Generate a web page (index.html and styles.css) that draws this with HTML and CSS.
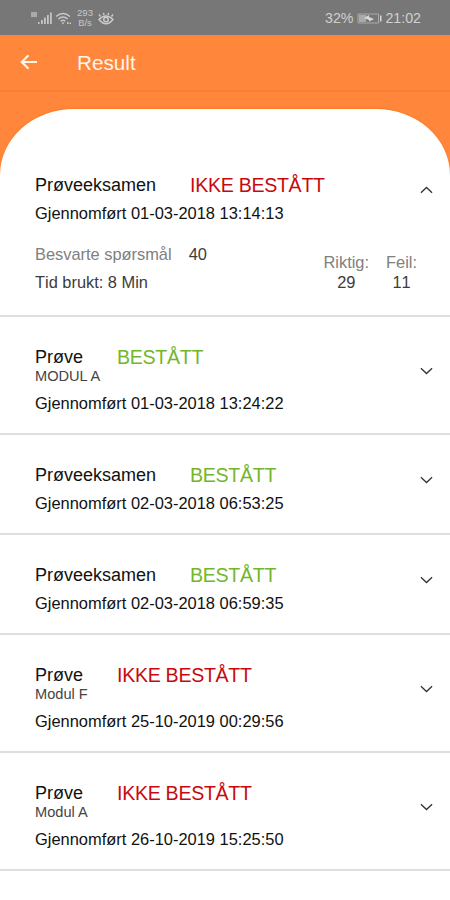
FILE: index.html
```html
<!DOCTYPE html>
<html lang="no">
<head>
<meta charset="utf-8">
<title>Result</title>
<link rel="stylesheet" href="styles.css">
</head>
<body>
<svg class="defs" width="0" height="0" aria-hidden="true">
  <symbol id="down" viewBox="0 0 14 8"><path d="M1 1l6 5.700L13 1"/></symbol>
  <symbol id="up" viewBox="0 0 14 8"><path d="M1 7l6-5.700L13 7"/></symbol>
</svg>
<div class="statusbar">
  <svg class="signal" width="23" height="14" viewBox="0 0 23 14">
    <path class="dim" d="M1 1h6v5H1z"/>
    <path d="M8 11h1.600v2H8zM11 9h1.800v4H11zM14 6.500h1.800V13H14zM17 4h1.800v9H17zM20 1.500h1.800V13H20z"/>
  </svg>
  <svg class="wifi" width="17" height="13" viewBox="0 0 17 13">
    <path d="M1 4.500q7-6 14 0M3.300 7q4.700-4 9.400 0M5.700 9.300q2.300-2 4.600 0"/>
    <path class="fill" d="M6.500 10.500h3L8 12.500zM12 10h1.500v2H12zM14.500 10.500H16v1.500h-1.500z"/>
  </svg>
  <div class="speed"><span>293</span><span>B/s</span></div>
  <svg class="eye" width="16" height="13" viewBox="0 0 16 13">
    <path d="M1 7.500q7-7 14 0-7 8.500-14 0zM2.500 4.500L1 2.500M6 3L5.500.8M10 3l.5-2.200M13.500 4.500L15 2.500"/>
    <circle cx="8" cy="7.500" r="2.300"/>
  </svg>
  <div class="right">
    <span>32%</span>
    <svg class="battery" width="25" height="11" viewBox="0 0 25 11">
      <path class="line" d="M1 1h20.500v9H1z"/>
      <path class="charge" d="M2 2h7v7H2z"/>
      <path class="bolt" d="M7 5l5-3v2l5 2-5 2.500V7z"/>
      <path class="bolt" d="M23 2.500h1.500v6H23z"/>
    </svg>
    <span class="clock">21:02</span>
  </div>
</div>
<header class="appbar">
  <svg width="18" height="16" viewBox="0 0 18 16"><path d="M17 8H2M8.500 1.300L1.800 8l6.700 6.700"/></svg>
  <h1>Result</h1>
</header>
<main class="backdrop">
  <div class="sheet">
    <section class="row first">
      <div class="head">
        <div>
          <div class="title"><h2>Prøveeksamen</h2><span class="status fail">IKKE BESTÅTT</span></div>
          <p class="date">Gjennomført 01-03-2018 13:14:13</p>
        </div>
        <svg class="chevron"><use href="#up"/></svg>
      </div>
      <div class="details">
        <div class="summary">
          <p><span class="label">Besvarte spørsmål</span><span class="answered">40</span></p>
          <p>Tid brukt: 8 Min</p>
        </div>
        <div class="score"><span class="label">Riktig:</span><span>29</span></div>
        <div class="score"><span class="label">Feil:</span><span>11</span></div>
      </div>
    </section>
    <section class="row">
      <div class="head">
        <div>
          <div class="title"><h2>Prøve</h2><span class="status pass">BESTÅTT</span></div>
          <p class="module">MODUL A</p>
          <p class="date">Gjennomført 01-03-2018 13:24:22</p>
        </div>
        <svg class="chevron"><use href="#down"/></svg>
      </div>
    </section>
    <section class="row">
      <div class="head">
        <div>
          <div class="title"><h2>Prøveeksamen</h2><span class="status pass">BESTÅTT</span></div>
          <p class="date">Gjennomført 02-03-2018 06:53:25</p>
        </div>
        <svg class="chevron"><use href="#down"/></svg>
      </div>
    </section>
    <section class="row">
      <div class="head">
        <div>
          <div class="title"><h2>Prøveeksamen</h2><span class="status pass">BESTÅTT</span></div>
          <p class="date">Gjennomført 02-03-2018 06:59:35</p>
        </div>
        <svg class="chevron"><use href="#down"/></svg>
      </div>
    </section>
    <section class="row">
      <div class="head">
        <div>
          <div class="title"><h2>Prøve</h2><span class="status fail">IKKE BESTÅTT</span></div>
          <p class="module">Modul F</p>
          <p class="date">Gjennomført 25-10-2019 00:29:56</p>
        </div>
        <svg class="chevron"><use href="#down"/></svg>
      </div>
    </section>
    <section class="row">
      <div class="head">
        <div>
          <div class="title"><h2>Prøve</h2><span class="status fail">IKKE BESTÅTT</span></div>
          <p class="module">Modul A</p>
          <p class="date">Gjennomført 26-10-2019 15:25:50</p>
        </div>
        <svg class="chevron"><use href="#down"/></svg>
      </div>
    </section>
  </div>
</main>
</body>
</html>
```
FILE: styles.css
```css
* { box-sizing: border-box; }

body {
  margin: 0;
  height: 900px;
  display: flex;
  flex-direction: column;
  overflow: hidden;
  background: #fff;
  color: #111;
  font-family: "Liberation Sans", Arial, sans-serif;
}

h1, h2, p { margin: 0; font-weight: 400; }

svg { display: block; flex: none; }
.defs { position: absolute; }

.statusbar {
  height: 35px;
  flex: none;
  display: flex;
  align-items: center;
  padding: 1px 29px 0 30px;
  background: #777;
  color: #d0d0d0;
}
.signal { fill: #c4c4c4; }
.signal .dim { fill: #aaa; }
.wifi { margin-left: 2px; fill: none; stroke: #c8c8c8; stroke-width: 1.4; }
.wifi .fill { fill: #c8c8c8; stroke: none; }
.speed {
  width: 18px;
  margin-left: 4px;
  display: flex;
  flex-direction: column;
  align-items: center;
  font-size: 9.5px;
  line-height: 10px;
  color: #c8c8c8;
}
.eye { margin-left: 4px; fill: none; stroke: #ccc; stroke-width: 1.4; }
.right {
  margin-left: auto;
  display: flex;
  align-items: center;
  font-size: 14.2px;
}
.battery { margin: 0 3px 0 4px; }
.battery .line { fill: none; stroke: #aaa; }
.battery .charge { fill: #aaa; }
.battery .bolt { fill: #d8d8d8; }

.appbar {
  height: 57px;
  flex: none;
  display: flex;
  align-items: center;
  gap: 39px;
  padding: 0 20px 2px;
  background: #ff863b;
  border-bottom: 2px solid #f58038;
  color: #fff5ea;
}
.appbar svg { fill: none; stroke: #fff5ea; stroke-width: 2.2; }
.appbar h1 { font-size: 20.7px; line-height: 24px; padding-top: 2px; }

.backdrop {
  flex: 1;
  padding-top: 17px;
  background: #ff863b;
}

.sheet {
  height: 100%;
  background: #fff;
  border-radius: 74px 74px 0 0 / 66px 66px 0 0;
  box-shadow: 0 -1px 1px #fb7d20;
}

.row {
  padding: 28px 17px 20px 35px;
  border-bottom: 2px solid #dedede;
}
.row.first { padding: 64px 17px 23px 35px; }

.head { display: flex; align-items: center; justify-content: space-between; }
.title { display: flex; height: 22px; gap: 34px; }
.title h2 { font-size: 18px; line-height: 22px; padding-top: 1px; white-space: nowrap; }
.status { padding-top: 1px; font-size: 19.6px; line-height: 22px; letter-spacing: -0.3px; white-space: nowrap; }
.fail { color: #c9080d; }
.pass { color: #73b62a; }
.module { font-size: 14.6px; line-height: 18px; color: #444; }
.date { margin-top: 8px; font-size: 16.45px; line-height: 20px; }

.chevron {
  width: 13px;
  height: 8px;
  margin-bottom: 16px;
  fill: none;
  stroke: #333;
  stroke-width: 1.4;
}

.details {
  display: flex;
  align-items: flex-end;
  margin-top: 21px;
  font-size: 16.4px;
  font-kerning: none;
  line-height: 20px;
  color: #3c3c3c;
}
.summary { flex: 1; display: flex; flex-direction: column; gap: 8px; }
.label { color: #808080; }
.answered { margin-left: 17px; }
.score {
  display: flex;
  flex-direction: column;
  align-items: center;
  margin-right: 17px;
}
.score:last-child { margin-right: 16px; }
```
